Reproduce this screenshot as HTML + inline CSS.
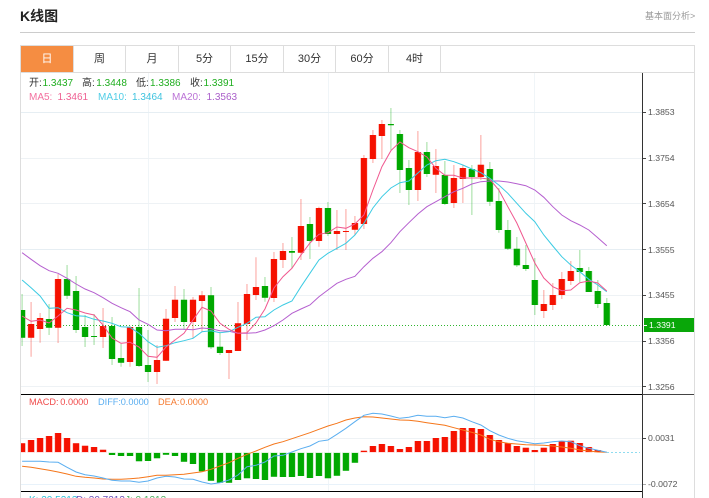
<!DOCTYPE html>
<html lang="zh"><head><meta charset="utf-8"><title>K线图</title>
<style>
html,body{margin:0;padding:0;background:#fff;width:709px;height:498px;overflow:hidden}
body{font-family:"Liberation Sans","Noto Sans CJK SC",sans-serif}
#w{position:relative;width:709px;height:498px;overflow:hidden}
.a{position:absolute;white-space:nowrap}
.tab{position:absolute;top:46px;height:26px;line-height:26px;text-align:center;font-size:11px;color:#333;border-right:1px solid #ddd;box-sizing:border-box}
.l{position:absolute;font-size:10px;line-height:12px;white-space:nowrap}
.m{position:absolute;font-size:9.2px;line-height:12px;white-space:nowrap;top:396px}
.y{position:absolute;left:648px;font-size:8.7px;line-height:12px;color:#555}
svg{position:absolute;left:0;top:0}
</style></head><body><div id="w">
<div class="a" style="left:20px;top:7px;font-size:14px;line-height:18px;font-weight:bold;color:#222">K线图</div>
<div class="a" style="left:645px;top:10px;font-size:9px;line-height:12px;color:#999">基本面分析&gt;</div>
<div class="a" style="left:20px;top:32px;width:675px;height:1px;background:#ccc"></div>
<div class="a" style="left:20px;top:45px;width:675px;height:28px;box-sizing:border-box;border:1px solid #ddd"></div>
<div class="tab" style="left:21px;width:53px;background:#f58d42;color:#fff;">日</div>
<div class="tab" style="left:74px;width:52px">周</div>
<div class="tab" style="left:126px;width:53px">月</div>
<div class="tab" style="left:179px;width:52px">5分</div>
<div class="tab" style="left:231px;width:53px">15分</div>
<div class="tab" style="left:284px;width:52px">30分</div>
<div class="tab" style="left:336px;width:53px">60分</div>
<div class="tab" style="left:389px;width:52px">4时</div>
<div class="a" style="left:20px;top:73px;width:1px;height:425px;background:#ddd"></div>
<div class="a" style="left:694px;top:73px;width:1px;height:425px;background:#ddd"></div>

<svg width="709" height="498" viewBox="0 0 709 498">
<defs><clipPath id="c"><rect x="21" y="73" width="621" height="418"/></clipPath></defs>
<g stroke="#f0f5f8" fill="none"><path d="M148.5 73V491M328.5 73V491M534.5 73V491"/></g>
<g stroke="#e6eef3" fill="none"><path d="M21 112.5H642M21 249.5H642"/></g>
<g stroke="#eef2f5" fill="none"><path d="M21 158.5H642M21 203.5H642M21 295.5H642M21 341.5H642M21 386.5H642M21 438.5H642"/></g>
<path d="M21 484.5H642" stroke="#e8f2fa" fill="none"/>
<path d="M21 325.5H642" stroke="#2fb52f" stroke-dasharray="1 2" fill="none"/>
<g clip-path="url(#c)"><g transform="translate(22.1 0) scale(8.995 1)" fill="none">
<g stroke-width="1.2" stroke="#f51100" stroke-opacity=".32"><path vector-effect="non-scaling-stroke" d="M1 302V356.7M2 313V342.7M4 274V343M9 308V348M12 326V366.7M15 345V384M16 309V361M17 286V322M19 297V338M20 291V332M23 350V379M24 302V351M25 284V340M26 257.3V300M28 252V302M29 243V268M31 199V260M33 206.7V246.7M35 210V250M36 209V250M37 216V235M38 155V229M39 130V163M40 120V159M44 131V201M46 149V193M48 165V208M49 165V203M51 135V180M58 290V318M59 283V310M60 272V299M61 261V285"/></g>
<g stroke-width="1.2" stroke="#00a800" stroke-opacity=".32"><path vector-effect="non-scaling-stroke" d="M0 294V346M3 304V335M5 265V299M6 276V333M7 315V347M8 314V345M10 317V365M11 344V366.7M13 288V367M14 330V382M18 289V330M21 287V349M22 332V355M27 277V301.7M30 237V268M32 217V259M34 202V236M41 108V150M42 130V193M43 160V205M45 142V177M47 161V205M50 165V215M52 162V206M53 188V232.7M54 220V250M55 237V267M56 245V271M57 258V315M62 250V282M63 267V292M64 280V308M65 298V326"/></g>
<g stroke-width="7.4" stroke="#f51100" stroke-opacity=".22"><path vector-effect="non-scaling-stroke" d="M1 324V337.7M2 318V329M4 279V327.7M9 326V337M12 327V362M15 360V372M16 318.7V360.7M17 299.7V318M19 299.7V322M20 295.3V301M23 350V353M24 323.3V351M25 294V324M26 287V295M28 259V298M29 251V260M31 226V252.7M33 208V241M35 231V234M37 223V229.7M38 158V224M39 135V159M40 124V136M44 152V190M46 166V174.7M48 178V203M49 168V179M51 164.7V177M58 304V311M59 295V305M60 279V295M61 271V281"/></g>
<g stroke-width="7.4" stroke="#00a800" stroke-opacity=".22"><path vector-effect="non-scaling-stroke" d="M0 310V337.7M3 319V327.7M5 279V295.7M6 291V330M7 327V337M10 326V359M11 358V362.7M13 327V366M14 365V372M18 299.7V322M21 295.3V347.3M22 346.7V353M27 286V297.7M32 224V241M34 208V234M42 134V170M43 168V190M45 152V174M47 175V204M50 169V177M52 169V201.7M53 201V230M54 230V248.7M55 248.7V265.3M56 265V269M57 280V305M62 268V272M63 271V292M64 291V304M65 303V325"/></g>
<g stroke-width="6" stroke="#f51100"><path vector-effect="non-scaling-stroke" d="M1 324V337.7M2 318V329M4 279V327.7M9 326V337M12 327V362M15 360V372M16 318.7V360.7M17 299.7V318M19 299.7V322M20 295.3V301M23 350V353M24 323.3V351M25 294V324M26 287V295M28 259V298M29 251V260M31 226V252.7M33 208V241M35 231V234M36 231V232M37 223V229.7M38 158V224M39 135V159M40 124V136M44 152V190M46 166V174.7M48 178V203M49 168V179M51 164.7V177M58 304V311M59 295V305M60 279V295M61 271V281"/></g>
<g stroke-width="6" stroke="#00a800"><path vector-effect="non-scaling-stroke" d="M0 310V337.7M3 319V327.7M5 279V295.7M6 291V330M7 327V337M8 336V337M10 326V359M11 358V362.7M13 327V366M14 365V372M18 299.7V322M21 295.3V347.3M22 346.7V353M27 286V297.7M30 251V252.7M32 224V241M34 208V234M41 124V125.2M42 134V170M43 168V190M45 152V174M47 175V204M50 169V177M52 169V201.7M53 201V230M54 230V248.7M55 248.7V265.3M56 265V269M57 280V305M62 268V272M63 271V292M64 291V304M65 303V325"/></g>

<polyline vector-effect="non-scaling-stroke" stroke="#b55fcf" stroke-width="1" points="0,252.7 1,259.3 2,265.7 3,270.7 4,273.3 5,278.3 6,284 7,289 8,292.7 9,297.7 10,303.3 11,307.7 12,311.7 13,320 14,324.3 15,330 16,330.7 17,329.3 18,329.3 19,329.7 20,328 21,328.7 22,330.7 23,331.3 24,333.3 25,333.3 26,332.7 27,330 28,325.7 29,320 30,313.3 31,309 32,305 33,296.7 34,290 35,283.3 36,279.3 37,276.3 38,266.7 39,258.3 40,251.7 41,242.7 42,231.7 43,222.7 44,214 45,206.7 46,201.7 47,196.7 48,191.7 49,188.3 50,184 51,181.7 52,181 53,181 54,182 55,183.7 56,185.7 57,190 58,197.3 59,206.7 60,215 61,220.7 62,225 63,230 64,237.7 65,245.7"/>
<polyline vector-effect="non-scaling-stroke" stroke="#3ccbe3" stroke-width="1" points="0,280 1,287.7 2,296 3,308.3 4,307.7 5,312.7 6,315.7 7,316.3 8,319.3 9,321 10,323.3 11,326.7 12,327.3 13,333.3 14,341.7 15,347.3 16,345.7 17,342.7 18,340.7 19,338.3 20,331.7 21,330.7 22,332.7 23,331.7 24,327.3 25,323.3 26,317.3 27,316.7 28,310 29,305 30,301 31,286.7 32,273.3 33,260 34,253.3 35,248.3 36,243.3 37,235 38,223.3 39,208 40,196.7 41,188 42,182.7 43,181 44,173 45,165 46,160.7 47,159.3 48,161.7 49,165 50,169 51,172.7 52,178.3 53,185 54,193.3 55,203.3 56,213.3 57,221.7 58,235 59,246 60,256.7 61,265 62,271.7 63,279.3 64,285 65,291.7"/>
<polyline vector-effect="non-scaling-stroke" stroke="#f0588f" stroke-width="1" points="0,316 1,321.3 2,320 3,323 4,316 5,308.3 6,310 7,313 8,315 9,325 10,338 11,343.3 12,342.3 13,347 14,356.3 15,357.3 16,347 17,340 18,333.3 19,320 20,307.3 21,311 22,323.3 23,329.3 24,333.3 25,332.7 26,323 27,309 28,288 29,276.7 30,268.3 31,255 32,243 33,234.3 34,232.7 35,227 36,228.3 37,224 38,215 39,190 40,166.7 41,150.7 42,142 43,147.7 44,151.7 45,157 46,168.3 47,175.3 48,175.3 49,178 50,178 51,178 52,179.3 53,190 54,206.7 55,223 56,243 57,263 58,278 59,286.7 60,290.7 61,290 62,282.7 63,281 64,283 65,291"/>

<g stroke="#f51100" stroke-opacity=".25" stroke-width="7.4"><path vector-effect="non-scaling-stroke" d="M0 443.3V452.5M1 440V452.5M2 438V452.5M3 436V452.5M4 433V452.5M5 438V452.5M6 443.3V452.5M7 445.7V452.5M8 447V452.5M9 449.7V452.5M38 450.7V452.5M39 446V452.5M40 444V452.5M41 446V452.5M42 449V452.5M43 447V452.5M44 441V452.5M45 441V452.5M46 438V452.5M47 437V452.5M48 431V452.5M49 428V452.5M50 428V452.5M51 429V452.5M52 435V452.5M53 440V452.5M54 443.3V452.5M55 446V452.5M56 447.7V452.5M57 450V452.5M58 447.7V452.5M59 444V452.5M60 441.3V452.5M61 440.7V452.5M62 443V452.5M63 447V452.5M64 450V452.5"/></g>
<g stroke="#00a800" stroke-opacity=".25" stroke-width="7.4"><path vector-effect="non-scaling-stroke" d="M10 452.5V455M11 452.5V456M12 452.5V456M13 452.5V461.3M14 452.5V461M15 452.5V458.3M16 452.5V454.7M17 452.5V456M18 452.5V461.7M19 452.5V464M20 452.5V471.3M21 452.5V480.7M22 452.5V482.7M23 452.5V482.7M24 452.5V480M25 452.5V478.3M26 452.5V479M27 452.5V480M28 452.5V476.7M29 452.5V477M30 452.5V477M31 452.5V476M32 452.5V478M33 452.5V476M34 452.5V478.3M35 452.5V475.7M36 452.5V470.7M37 452.5V462.7"/></g>
<g stroke="#f51100" stroke-width="6"><path vector-effect="non-scaling-stroke" d="M0 443.3V452M1 440V452M2 438V452M3 436V452M4 433V452M5 438V452M6 443.3V452M7 445.7V452M8 447V452M9 449.7V452M38 450.7V452M39 446V452M40 444V452M41 446V452M42 449V452M43 447V452M44 441V452M45 441V452M46 438V452M47 437V452M48 431V452M49 428V452M50 428V452M51 429V452M52 435V452M53 440V452M54 443.3V452M55 446V452M56 447.7V452M57 450V452M58 447.7V452M59 444V452M60 441.3V452M61 440.7V452M62 443V452M63 447V452M64 450V452"/></g>
<g stroke="#00a800" stroke-width="6"><path vector-effect="non-scaling-stroke" d="M10 453V455M11 453V456M12 453V456M13 453V461.3M14 453V461M15 453V458.3M16 453V454.7M17 453V456M18 453V461.7M19 453V464M20 453V471.3M21 453V480.7M22 453V482.7M23 453V482.7M24 453V480M25 453V478.3M26 453V479M27 453V480M28 453V476.7M29 453V477M30 453V477M31 453V476M32 453V478M33 453V476M34 453V478.3M35 453V475.7M36 453V470.7M37 453V462.7"/></g>
<polyline vector-effect="non-scaling-stroke" stroke="#f5761a" stroke-width="1" points="0,466.3 1,467.3 2,468.7 3,470.3 4,472 5,474 6,476.3 7,477.3 8,478 9,479 10,479.3 11,479.3 12,478.7 13,478 14,476.7 15,475.3 16,475.3 17,474.7 18,474.3 19,473 20,471.7 21,469.3 22,466 23,462.7 24,458.3 25,454.3 26,451 27,447.3 28,444 29,441.7 30,438.7 31,435.7 32,432.7 33,429.3 34,426 35,423.3 36,420 37,418 38,416.7 39,417 40,418 41,419 42,420 43,420.3 44,421.3 45,422.7 46,424 47,425.3 48,427.7 49,430 50,432.3 51,435 52,439.3 53,441.7 54,443.3 55,444 56,444.7 57,445 58,445.3 59,446 60,447 61,448.3 62,450 63,451 64,452 65,452.3"/>
<polyline vector-effect="non-scaling-stroke" stroke="#5aaef0" stroke-width="1" points="0,461.3 1,461.3 2,461.3 3,462 4,462.3 5,467.3 6,472 7,474.7 8,476 9,478 10,480.3 11,481 12,481 13,482.3 14,481 15,478 16,476.3 17,477 18,479 19,479.3 20,482 21,484 22,482.7 23,480 24,475 25,466.7 26,465.3 27,462 28,456 29,455.3 30,452 31,448.7 32,446 33,441.3 34,440 35,434.3 36,428.3 37,421.7 38,415.3 39,413.3 40,414 41,416 42,418.3 43,417.3 44,415.3 45,416.3 46,416.3 47,417.7 48,416.3 49,418 50,421.7 51,425 52,430.7 53,435 54,438.3 55,440.7 56,442.3 57,443.7 58,443 59,441.7 60,441 61,441.7 62,445.7 63,448.3 64,450.3 65,452.3"/>
</g></g>
<path d="M607 452.5H640" stroke="#8fdcf0" stroke-dasharray="2 2" fill="none"/>
<path d="M21 394.5H642" stroke="#000" fill="none"/><path d="M642 394.5H694" stroke="#444" fill="none"/>
<path d="M21 491.5H642" stroke="#000" fill="none"/>
<path d="M642.5 73V498" stroke="#333" fill="none"/>
<path d="M643 112.5H646M643 158.5H646M643 203.5H646M643 249.5H646M643 295.5H646M643 341.5H646M643 386.5H646M643 438.5H646" stroke="#444" fill="none"/>
<path d="M643 484.5H646" stroke="#aaa" fill="none"/>
<rect x="644" y="318" width="50" height="14" fill="#09a709"/>
<path d="M644 325.5H647" stroke="#fff" fill="none"/>
</svg>

<div class="l" style="left:29px;top:78px;color:#333">开:</div><div class="l" style="left:42.5px;top:78px;color:#1fae1f">1.3437</div>
<div class="l" style="left:82px;top:78px;color:#333">高:</div><div class="l" style="left:96.3px;top:78px;color:#1fae1f">1.3448</div>
<div class="l" style="left:136px;top:78px;color:#333">低:</div><div class="l" style="left:150px;top:78px;color:#1fae1f">1.3386</div>
<div class="l" style="left:190px;top:78px;color:#333">收:</div><div class="l" style="left:203.5px;top:78px;color:#1fae1f">1.3391</div>
<div class="l" style="left:29px;top:92px;color:#f3709f">MA5:</div><div class="l" style="left:57.5px;top:92px;color:#ee5f92">1.3461</div>
<div class="l" style="left:98px;top:92px;color:#4fcde6">MA10:</div><div class="l" style="left:132px;top:92px;color:#3ec3df">1.3464</div>
<div class="l" style="left:172px;top:92px;color:#bb72d6">MA20:</div><div class="l" style="left:206.5px;top:92px;color:#aa5fca">1.3563</div>

<div class="m" style="left:29px;color:#f04a4a">MACD:</div><div class="m" style="left:60.3px;color:#f04a4a">0.0000</div>
<div class="m" style="left:98px;color:#5aaef0">DIFF:</div><div class="m" style="left:120.7px;color:#5aaef0">0.0000</div>
<div class="m" style="left:158px;color:#f57a30">DEA:</div><div class="m" style="left:180px;color:#f57a30">0.0000</div>
<div class="l" style="left:29px;top:494.5px;color:#2cc0d8">K: 20.5213</div>
<div class="l" style="left:76px;top:494.5px;color:#6a4fb8">D: 30.7213</div>
<div class="l" style="left:125px;top:494.5px;color:#4fae5f">J: 0.1213</div>

<div class="y" style="top:106px">1.3853</div>
<div class="y" style="top:152px">1.3754</div>
<div class="y" style="top:197.5px">1.3654</div>
<div class="y" style="top:243.5px">1.3555</div>
<div class="y" style="top:289px">1.3455</div>
<div class="y" style="top:319px;left:649px;color:#fff">1.3391</div>
<div class="y" style="top:335px">1.3356</div>
<div class="y" style="top:380.5px">1.3256</div>
<div class="y" style="top:432px">0.0031</div>
<div class="y" style="top:478px">-0.0072</div>
</div></body></html>
